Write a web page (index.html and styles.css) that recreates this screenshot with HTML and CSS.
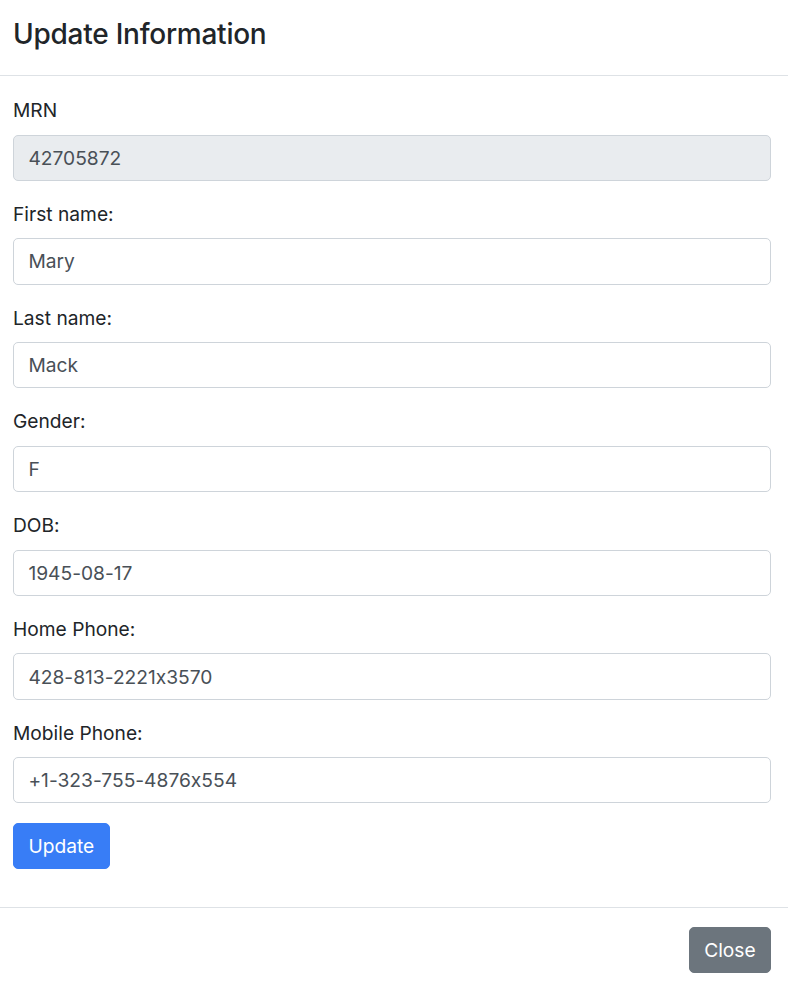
FILE: index.html
```html
<!DOCTYPE html>
<html>
<head>
<meta charset="utf-8">
<link rel="stylesheet" href="styles.css">
</head>
<body>
<div class="modal">
  <div class="modal-header">
    <h4 class="modal-title">Update Information</h4>
  </div>
  <div class="modal-body">
    <form class="form">
      <div class="form-group">
        <label class="label">MRN</label>
        <input class="input" type="text" value="42705872" disabled>
      </div>
      <div class="form-group">
        <label class="label">First name:</label>
        <input class="input" type="text" value="Mary">
      </div>
      <div class="form-group">
        <label class="label">Last name:</label>
        <input class="input" type="text" value="Mack">
      </div>
      <div class="form-group">
        <label class="label">Gender:</label>
        <input class="input" type="text" value="F">
      </div>
      <div class="form-group">
        <label class="label">DOB:</label>
        <input class="input" type="text" value="1945-08-17">
      </div>
      <div class="form-group">
        <label class="label">Home Phone:</label>
        <input class="input" type="text" value="428-813-2221x3570">
      </div>
      <div class="form-group">
        <label class="label">Mobile Phone:</label>
        <input class="input" type="text" value="+1-323-755-4876x554">
      </div>
      <button type="button" class="btn btn-primary">Update</button>
    </form>
  </div>
  <div class="modal-footer">
    <button type="button" class="btn btn-secondary">Close</button>
  </div>
</div>
</body>
</html>
```
FILE: styles.css
```css
html, body {
  margin: 0;
  padding: 0;
  background: #fff;
}
body {
  font-family: Inter, "Noto Sans", "Liberation Sans", sans-serif;
  font-feature-settings: "calt" 0;
  color: #212529;
  font-size: 19.2px;
}
.modal {
  width: 788px;
  display: flex;
  flex-direction: column;
}
.modal-header {
  padding: 17px 17px 23px 13px;
  border-bottom: 1px solid #dee2e6;
}
.modal-title {
  margin: 0;
  font-size: 28px;
  line-height: 35px;
  font-weight: 500;
  letter-spacing: -0.25px;
}
.modal-body {
  padding: 20.2px 17px 19.2px 13px;
}
.form {
  margin: 0 0 19.2px 0;
  display: flex;
  flex-direction: column;
  align-items: flex-start;
}
.form-group {
  display: flex;
  flex-direction: column;
  align-self: stretch;
  margin-bottom: 19.2px;
}
.label {
  line-height: 28.8px;
  margin-bottom: 9.6px;
  font-size: 19.2px;
}
.input {
  box-sizing: border-box;
  height: 46.2px;
  width: 100%;
  margin: 0;
  padding: 0 14.4px;
  font-family: inherit;
  font-feature-settings: "calt" 0;
  font-size: 19.2px;
  color: #495057;
  background: #fff;
  border: 1px solid #ced4da;
  border-radius: 5px;
  outline: none;
}
.input:disabled {
  background: #e9ecef;
  opacity: 1;
  color: #495057;
}
.btn {
  box-sizing: border-box;
  height: 46.2px;
  padding: 0 14.4px;
  font-family: inherit;
  font-size: 19.2px;
  border-radius: 5px;
  border: 1px solid transparent;
  color: #fff;
  cursor: pointer;
}
.btn-primary {
  background: #387df6;
  border-color: #387df6;
}
.btn-secondary {
  background: #6c757d;
  border-color: #6c757d;
}
.modal-footer {
  border-top: 1px solid #dee2e6;
  padding: 19.2px 17px 19.2px 13px;
  display: flex;
  justify-content: flex-end;
}
```
